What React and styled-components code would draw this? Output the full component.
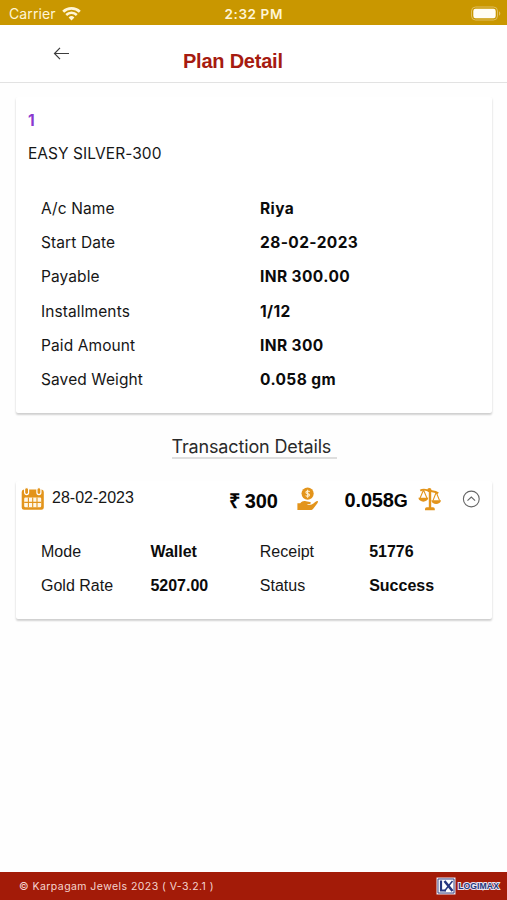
import React from "react";
import styled, { createGlobalStyle } from "styled-components";

const GlobalStyle = createGlobalStyle`
  * {
    box-sizing: border-box;
  }
  body {
    margin: 0;
    background: #fefefe;
    color: #161616;
    font-family: Inter, "Liberation Sans", sans-serif;
  }
  svg {
    display: block;
    flex-shrink: 0;
  }
`;

const Page = styled.div`
  display: flex;
  flex-direction: column;
  width: 507px;
  height: 900px;
  overflow: hidden;
`;

const StatusBar = styled.div`
  display: grid;
  grid-template-columns: 1fr auto 1fr;
  align-items: center;
  flex-shrink: 0;
  height: 25px;
  padding: 2px 6.5px 0 9px;
  background: #c99700;
  color: #fff5d6;
`;

const Carrier = styled.div`
  display: flex;
  align-items: center;
  gap: 6px;
  font-size: 14px;
  letter-spacing: 0.1px;
`;

const Clock = styled.div`
  margin-right: 2px;
  font-size: 13.5px;
  font-weight: 600;
  letter-spacing: 0.6px;
`;

const Battery = styled.div`
  justify-self: end;
`;

const Header = styled.header`
  display: flex;
  align-items: flex-start;
  flex-shrink: 0;
  height: 58px;
  padding: 21px 0 0 53px;
  border-bottom: 1px solid #e2e2e2;
  background: #fff;
`;

const Title = styled.h1`
  margin: 4px 0 0 113px;
  color: #a61b10;
  font-size: 20px;
  font-weight: 700;
  line-height: 23px;
  letter-spacing: -0.23px;
  font-family: "Liberation Sans", Arial, sans-serif;
`;

const Content = styled.main`
  flex: 1;
  padding: 14px 15px 0 16px;
`;

const Card = styled.section`
  height: ${(props) => props.$height}px;
  padding: ${(props) => props.$padding};
  border-radius: 2px;
  background: #fff;
  box-shadow: 0 2px 2px rgba(0, 0, 0, 0.14), 0 1px 3px rgba(0, 0, 0, 0.08);
  clip-path: inset(0 -6px -6px -6px);
`;

const PlanNumber = styled.div`
  color: #8a38d0;
  font-size: 15.5px;
  font-weight: 700;
  line-height: 20px;
`;

const PlanName = styled.div`
  margin-top: 13px;
  font-size: 15.5px;
  line-height: 20px;
  letter-spacing: 0.05px;
`;

const DetailList = styled.dl`
  display: grid;
  grid-template-columns: 219px 1fr;
  grid-auto-rows: 34.2px;
  align-items: center;
  margin: 27.4px 0 0 13px;
  font-size: 15.5px;
`;

const Label = styled.dt`
  letter-spacing: ${(props) => props.$spacing || "0"};
`;

const Value = styled.dd`
  margin: 0;
  color: #0b0b0b;
  font-weight: 700;
  letter-spacing: ${(props) => props.$spacing || "0"};
`;

const SectionTitle = styled.h2`
  width: 165px;
  height: 23px;
  margin: 23px 0 22px 155.5px;
  border-bottom: 2px solid #dedede;
  color: #2a2a2a;
  font-size: 18px;
  font-weight: 400;
  line-height: 22px;
  letter-spacing: -0.15px;
  white-space: nowrap;
`;

const Summary = styled.div`
  display: grid;
  grid-template-columns: 31px 176.5px 68.5px 47.5px 73.5px 43.5px 18px;
  align-items: center;
  height: 36px;
  font-family: "Liberation Sans", Arial, sans-serif;
`;

const SummaryDate = styled.div`
  padding-bottom: 3px;
  font-size: 16px;
`;

const Amount = styled.div`
  padding-top: 2px;
  color: #050505;
  font-size: 20px;
  font-weight: 700;
  letter-spacing: -0.15px;
  white-space: nowrap;

  small {
    font-size: 18px;
  }
`;

const TransactionGrid = styled.dl`
  display: grid;
  grid-template-columns: repeat(4, 109.4px);
  grid-auto-rows: 34.2px;
  align-items: center;
  margin: 18px 0 0 20px;
  font-family: "Liberation Sans", Arial, sans-serif;
  font-size: 16px;
`;

const Footer = styled.footer`
  display: flex;
  align-items: center;
  justify-content: space-between;
  flex-shrink: 0;
  height: 28px;
  padding: 0 8px 0 19px;
  background: #a31b08;
  color: #f5d5cf;
  font-size: 10.5px;
  letter-spacing: 0.44px;
`;

const Brand = styled.div`
  display: flex;
  align-items: center;
  gap: 2px;
`;

const BrandName = styled.span`
  color: #24377e;
  font-family: "Liberation Sans", Arial, sans-serif;
  font-size: 8.6px;
  font-weight: 700;
  letter-spacing: 0.1px;
  -webkit-text-stroke: 2px #e9e2ef;
  paint-order: stroke fill;
`;

const WifiIcon = () => (
  <svg width="19" height="14" viewBox="0 0 19 14" fill="none" stroke="#fff5d6">
    <path d="M1.2 4.8a12 12 0 0 1 16.6 0" strokeWidth="2.8" />
    <path d="M4.2 8a7.5 7.5 0 0 1 10.6 0" strokeWidth="2.5" />
    <path d="M6.6 10.4a4.1 4.1 0 0 1 5.8 0L9.5 13.5z" fill="#fff5d6" stroke="none" />
  </svg>
);

const BatteryIcon = () => (
  <svg width="31" height="15" viewBox="0 0 31 15">
    <rect x="1.5" y="1" width="26" height="13" rx="4" fill="none" stroke="#dfbe60" />
    <rect x="3.3" y="2.8" width="22.4" height="9.4" rx="2.2" fill="#fffdf6" />
    <path d="M29 5.3c1.8.7 1.8 3.7 0 4.4z" fill="#dfbe60" />
  </svg>
);

const BackIcon = () => (
  <svg width="17" height="15" viewBox="0 0 17 15" fill="none" stroke="#3d3d3d" strokeWidth="1.2">
    <path d="M16 7.5H1.8M7 1.9 1.5 7.5 7 13.1" />
  </svg>
);

const CalendarIcon = () => (
  <svg width="24" height="24" viewBox="0 0 24 24">
    <path d="M.7 5Q.7 2.5 3 2.5h17.5q2.3 0 2.3 2.5v15.5q0 2.3-2.3 2.3H3q-2.3 0-2.3-2.3z" fill="#e3941b" />
    <rect x="3.6" y=".6" width="4" height="7" rx="2" fill="#e3941b" stroke="#fff" strokeWidth="1.2" />
    <rect x="15.9" y=".6" width="4" height="7" rx="2" fill="#e3941b" stroke="#fff" strokeWidth="1.2" />
    <rect x="3.2" y="10.6" width="17" height="9.6" rx="1.2" fill="#fff8ea" />
    <path d="M7.4 10.6v9.6M11.7 10.6v9.6M16 10.6v9.6M3.2 15.4h17" stroke="#e3941b" strokeWidth="1.1" />
  </svg>
);

const HandCoinIcon = () => (
  <svg width="22" height="24" viewBox="0 0 22 24">
    <circle cx="10.6" cy="6.6" r="6.1" fill="#e3941b" />
    <path
      d="M12.6 4.8c-.5-1-3.6-1.1-3.7.5-.1 1.8 3.6.8 3.6 2.8 0 1.7-3.3 1.5-3.8.3M10.6 2.8v8"
      fill="none"
      stroke="#fff1d2"
      strokeWidth="1.1"
    />
    <path
      d="M.4 16.2h2.8c1.8-2.2 3.8-2.8 5.8-1.9 1.3.7 4.3.1 4.8 1.3.4 1.2-1.3 1.7-3.3 1.7v.7c3.5.1 5-.5 6.6-1.9 1.1-1.1 2.3-2.2 3.3-2 1.1.3.5 1.6-.2 2.5l-3.6 4.6c-.9 1.3-1.9 1.9-3.3 1.9H.4z"
      fill="#e3941b"
    />
  </svg>
);

const ScaleIcon = () => (
  <svg width="24" height="24" viewBox="0 0 24 24" fill="none" stroke="#e3941b">
    <path d="M2.3 3.6c3.2-2 5.4-.9 8.4.1s6.1.2 9.6 2.6" strokeWidth="1.9" />
    <circle cx="11.4" cy="3.2" r="2.1" fill="#e3941b" stroke="none" />
    <path d="M12 3v18" strokeWidth="2.4" />
    <path d="M5.5 3 2 11.2M5.5 3 9 11.2M18.2 5.3 15 13.6M18.2 5.3l3.4 8.3" strokeWidth="1.1" />
    <path
      d="M.4 10.8h9.9c-.4 5.1-9.5 5.1-9.9 0zM13.3 13.2h9.7c-.4 5.1-9.3 5.1-9.7 0zM7 23.3v-1.4q0-1.7 1.8-1.7h6.2q1.8 0 1.8 1.7v1.4z"
      fill="#e3941b"
      stroke="none"
    />
  </svg>
);

const CollapseIcon = () => (
  <svg width="18" height="18" viewBox="0 0 18 18" fill="none" stroke="#666" strokeWidth="1.1">
    <circle cx="9.3" cy="9" r="7.9" />
    <path d="m5.5 10.7 3.8-3.6 3.8 3.6" />
  </svg>
);

const LogimaxMark = () => (
  <svg width="20" height="18" viewBox="0 0 20 18" fill="none">
    <path d="M.5.5h19v17H.5z" fill="#e9e8f3" />
    <path d="M2 2h16v14H2z" fill="#fff" stroke="#3c4785" />
    <path d="M5 3.5v10h5" stroke="#26377f" strokeWidth="2.2" />
    <path d="m8.5 4 8 10" stroke="#26377f" strokeWidth="2.5" />
    <path d="m16.5 4-8 10" stroke="#26377f" strokeWidth="1.5" />
  </svg>
);

const planDetails = [
  { label: "A/c Name", value: "Riya" },
  { label: "Start Date", value: "28-02-2023" },
  { label: "Payable", value: "INR 300.00" },
  { label: "Installments", value: "1/12" },
  { label: "Paid Amount", value: "INR 300" },
  { label: "Saved Weight", value: "0.058 gm" },
];

const transactionDetails = [
  { label: "Mode", value: "Wallet" },
  { label: "Receipt", value: "51776" },
  { label: "Gold Rate", value: "5207.00" },
  { label: "Status", value: "Success" },
];

const App = () => {
  return (
    <>
      <GlobalStyle />
      <Page>
        <StatusBar>
          <Carrier>
            Carrier
            <WifiIcon />
          </Carrier>
          <Clock>2:32 PM</Clock>
          <Battery>
            <BatteryIcon />
          </Battery>
        </StatusBar>
        <Header>
          <BackIcon />
          <Title>Plan Detail</Title>
        </Header>
        <Content>
          <Card $height={316} $padding="14px 12px 0">
            <PlanNumber>1</PlanNumber>
            <PlanName>EASY SILVER-300</PlanName>
            <DetailList>
              {planDetails.map((item) => (
                <React.Fragment key={item.label}>
                  <Label $spacing="0.1px">{item.label}</Label>
                  <Value $spacing="0.4px">{item.value}</Value>
                </React.Fragment>
              ))}
            </DetailList>
          </Card>
          <SectionTitle>Transaction Details</SectionTitle>
          <Card $height={138} $padding="0 5px">
            <Summary>
              <CalendarIcon />
              <SummaryDate>28-02-2023</SummaryDate>
              <Amount>₹ 300</Amount>
              <HandCoinIcon />
              <Amount>
                0.058<small>G</small>
              </Amount>
              <ScaleIcon />
              <CollapseIcon />
            </Summary>
            <TransactionGrid>
              {transactionDetails.map((item) => (
                <React.Fragment key={item.label}>
                  <Label>{item.label}</Label>
                  <Value>{item.value}</Value>
                </React.Fragment>
              ))}
            </TransactionGrid>
          </Card>
        </Content>
        <Footer>
          <span>© Karpagam Jewels 2023 ( V-3.2.1 )</span>
          <Brand>
            <LogimaxMark />
            <BrandName>LOGIMAX</BrandName>
          </Brand>
        </Footer>
      </Page>
    </>
  );
};

export default App;
